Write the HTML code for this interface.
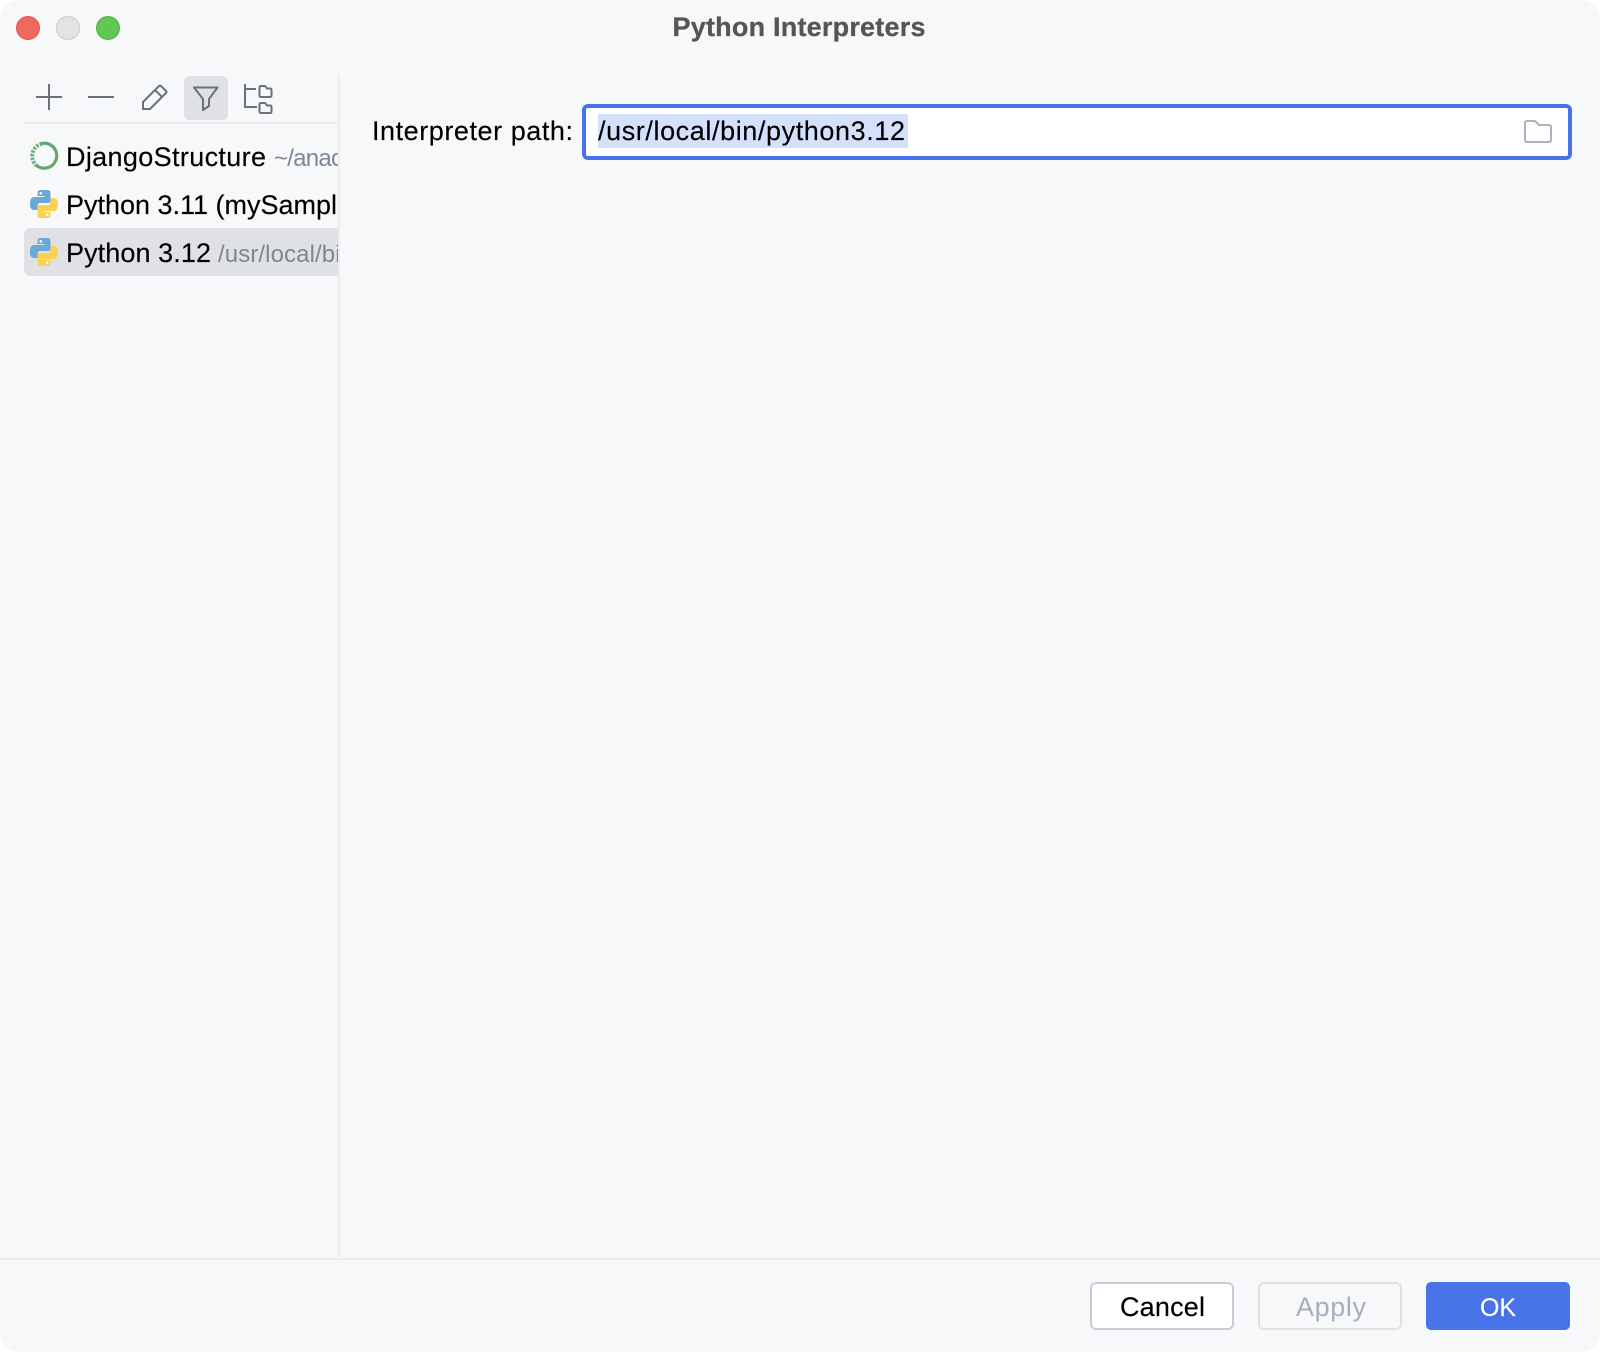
<!DOCTYPE html>
<html>
<head>
<meta charset="utf-8">
<title>Python Interpreters</title>
<style>
html,body{margin:0;padding:0;background:#fff;width:1600px;height:1352px;overflow:hidden}
svg{display:block}
text{font-family:"Liberation Sans",sans-serif;font-size:27px;fill:#000;stroke:#000;stroke-width:.15px}
</style>
</head>
<body>
<svg width="1600" height="1352" viewBox="0 0 1600 1352" xmlns="http://www.w3.org/2000/svg">
<defs>
<clipPath id="c"><rect x="0" y="130" width="338" height="150"/></clipPath>
<g id="py">
<path fill="#6BA8D6" d="M10.500 0H17.500Q20.500 0 20.500 3V10.500Q20.500 13 18 13H10.500Q7.500 13 7.500 16V20H4Q0 20 0 14Q0 7 4 7H14.500V6H7.500V3Q7.500 0 10.500 0Z"/>
<circle cx="10.800" cy="3.300" r="1.300" fill="#fff"/>
<g transform="rotate(180 14 14)">
<path fill="#FBD24F" d="M10.500 0H17.500Q20.500 0 20.500 3V10.500Q20.500 13 18 13H10.500Q7.500 13 7.500 16V20H4Q0 20 0 14Q0 7 4 7H14.500V6H7.500V3Q7.500 0 10.500 0Z"/>
<circle cx="10.800" cy="3.300" r="1.300" fill="#fff"/>
</g>
</g>
</defs>

<rect x="0" y="0" width="1600" height="1352" rx="20" fill="#F7F8FA"/>

<circle cx="28" cy="28" r="11.500" fill="#EE6A5E" stroke="#D9584D" stroke-width="1"/>
<circle cx="68" cy="28" r="11.500" fill="#E2E3E4" stroke="#CBCCCD" stroke-width="1"/>
<circle cx="108" cy="28" r="11.500" fill="#61C654" stroke="#52B045" stroke-width="1"/>

<text x="672.500" y="36" textLength="253" lengthAdjust="spacing" style="fill:#565656;stroke:#565656;stroke-width:.3px;font-weight:700">Python Interpreters</text>

<g fill="none" stroke="#6C707E" stroke-width="2">
<path d="M36 97H62M49 84V110"/>
<path d="M88 97H114"/>
<path d="M143 109H150L166 93Q167 92 166 91L161 86Q160 85 159 86L143 102ZM155 90L162 97" stroke-linejoin="round"/>
</g>
<rect x="184" y="76" width="44" height="44" rx="5" fill="#DFE1E5"/>
<g fill="none" stroke="#6C707E" stroke-width="2">
<path d="M194 87.500H217.500L209 99V106L203 110V99Z" stroke-linejoin="round"/>
<path d="M245 84V107H257M245 89H256"/>
<path d="M259.500 87.500Q259.500 86 261 86H265L267 88.500H270Q271.500 88.500 271.500 90V95.500Q271.500 97 270 97H261Q259.500 97 259.500 95.500Z"/>
<path d="M259.500 104.500Q259.500 103 261 103H265L267 105.500H270Q271.500 105.500 271.500 107V111.500Q271.500 113 270 113H261Q259.500 113 259.500 111.500Z"/>
</g>

<rect x="24" y="122" width="314" height="2" fill="#EBECF0"/>
<rect x="338" y="74" width="2" height="1185" fill="#EBECF0"/>
<rect x="0" y="1258" width="1600" height="2" fill="#EBECF0"/>

<path d="M24 236Q24 228 32 228H338V276H32Q24 276 24 268Z" fill="#DFE1E5"/>

<g fill="none" stroke="#62A76F" transform="translate(1 0)">
<path d="M40 143.600A12.500 12.500 0 1 1 35.500 165.500" stroke-width="3.200"/>
<path d="M41 143.800A12.500 12.500 0 0 0 35.500 165.500" stroke-width="4" stroke-dasharray="2.500 1.200" opacity=".9"/>
</g>
<use href="#py" x="30" y="190"/>
<use href="#py" x="30" y="238"/>

<g clip-path="url(#c)">
<text x="66" y="166" textLength="200" lengthAdjust="spacing">DjangoStructure</text>
<text x="274" y="166" style="font-size:24px;fill:#818594;stroke:none" textLength="69" lengthAdjust="spacing">~/anac</text>
<text x="66" y="214" textLength="271" lengthAdjust="spacing">Python 3.11 (mySampl</text>
<text x="66" y="262" textLength="145" lengthAdjust="spacing">Python 3.12</text>
<text x="218" y="262" style="font-size:24px;fill:#818594;stroke:none" textLength="136" lengthAdjust="spacing">/usr/local/bin</text>
</g>

<text x="372" y="140" textLength="201" lengthAdjust="spacing">Interpreter path:</text>

<rect x="584" y="106" width="986" height="52" rx="4" fill="#fff" stroke="#4674E8" stroke-width="4"/>
<rect x="598" y="114" width="310" height="34" fill="#D5E1FB"/>
<text x="598" y="140" textLength="307" lengthAdjust="spacing">/usr/local/bin/python3.12</text>
<path d="M1527 121H1535L1539 125H1549Q1551 125 1551 127V140Q1551 142 1549 142H1527Q1525 142 1525 140V123Q1525 121 1527 121Z" fill="none" stroke="#AEB2C0" stroke-width="2"/>

<rect x="1091" y="1283" width="142" height="46" rx="5" fill="#fff" stroke="#C9CCD6" stroke-width="2"/>
<text x="1120" y="1316" textLength="85" lengthAdjust="spacing">Cancel</text>
<rect x="1259" y="1283" width="142" height="46" rx="5" fill="none" stroke="#DFE1E5" stroke-width="2"/>
<text x="1296" y="1316" textLength="70" lengthAdjust="spacing" style="fill:#A8ADBD;stroke:none">Apply</text>
<rect x="1426" y="1282" width="144" height="48" rx="5" fill="#4674E8"/>
<text x="1480" y="1316" textLength="36" lengthAdjust="spacing" style="fill:#fff;stroke:#fff;font-size:25px">OK</text>
</svg>
</body>
</html>
